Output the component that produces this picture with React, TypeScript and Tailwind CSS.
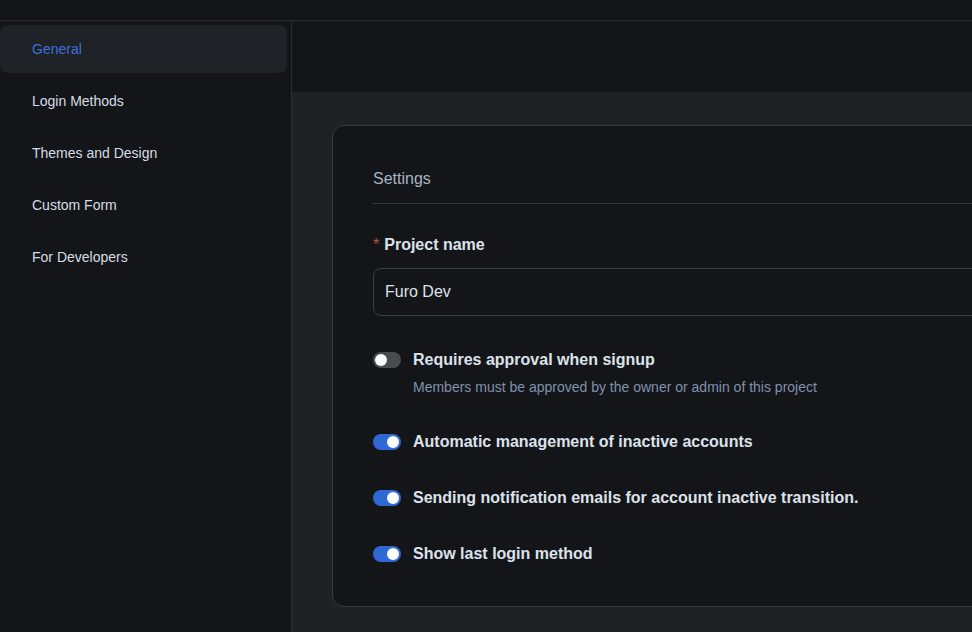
import React from "react";

function Toggle({ on }: { on: boolean }) {
  return (
    <div
      className={
        "relative h-4 w-7 shrink-0 rounded-full " +
        (on ? "bg-[#2f6ad4]" : "bg-[#4a4b50]")
      }
    >
      <div
        className={
          "absolute top-[2px] h-3 w-3 rounded-full bg-white " +
          (on ? "left-[14px]" : "left-[2px]")
        }
      />
    </div>
  );
}

function Row({ on, label, desc }: { on: boolean; label: string; desc?: string }) {
  return (
    <div className="flex items-start gap-3">
      <div className="flex h-6 items-center">
        <Toggle on={on} />
      </div>
      <div className="flex flex-col">
        <div className="text-base font-bold leading-6 text-[#dde2ea]">{label}</div>
        {desc && (
          <div className="mb-[1px] mt-[5px] text-sm leading-5 text-[#7f91ad]">{desc}</div>
        )}
      </div>
    </div>
  );
}

export default function App() {
  const items = ["General", "Login Methods", "Themes and Design", "Custom Form", "For Developers"];
  return (
    <div
      className="flex h-[632px] w-[972px] flex-col overflow-hidden bg-[#141519]"
      style={{ fontFamily: '"Liberation Sans", Arial, sans-serif' }}
    >
      <div className="h-[21px] shrink-0 border-b border-[#2a2c31]" />
      <div className="flex min-h-0 flex-1">
        <div className="flex w-[292px] shrink-0 flex-col gap-1 border-r border-[#2a2c31] pr-1 pt-1">
          {items.map((t, i) => (
            <div
              key={t}
              className={
                "flex h-12 items-center rounded-lg pl-8 text-sm " +
                (i === 0 ? "bg-[#1f2227] text-[#3d6fd6]" : "text-[#d7dce4]")
              }
            >
              {t}
            </div>
          ))}
        </div>
        <div className="flex min-w-0 flex-1 flex-col overflow-hidden">
          <div className="h-[71px] shrink-0 bg-[#141519]" />
          <div className="flex-1 bg-[#1f2125] pl-10 pt-[33px]">
            <div className="w-[760px] rounded-xl border border-[#373a41] bg-[#141519] px-10 pb-10 pt-[41px]">
              <div className="border-b border-[#34373d] pb-[12px] text-base leading-6 text-[#a7b4c6]">
                Settings
              </div>
              <div className="mt-[29px] flex items-center text-base font-bold leading-6 text-[#dde2ea]">
                <span className="mr-[5px] font-normal text-[#b9503f]">*</span>
                Project name
              </div>
              <div className="mt-[11px] flex h-12 items-center rounded-lg border border-[#3a3c41] pl-[11px] pr-3 text-base text-[#dde2ea]">
                Furo Dev
              </div>
              <div className="mt-[32px] flex flex-col gap-8">
                <Row
                  on={false}
                  label="Requires approval when signup"
                  desc="Members must be approved by the owner or admin of this project"
                />
                <Row on label="Automatic management of inactive accounts" />
                <Row on label="Sending notification emails for account inactive transition." />
                <Row on label="Show last login method" />
              </div>
            </div>
          </div>
        </div>
      </div>
    </div>
  );
}
